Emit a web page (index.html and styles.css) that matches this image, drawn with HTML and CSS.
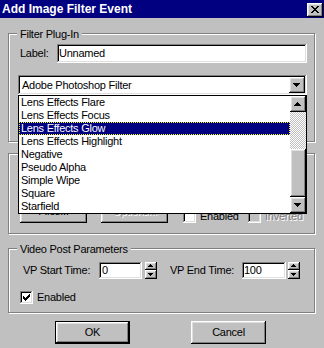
FILE: index.html
```html
<!DOCTYPE html>
<html>
<head>
<meta charset="utf-8">
<link rel="stylesheet" href="styles.css">
</head>
<body>
<div class="window">
  <div class="titlebar">
    <span class="title">Add Image Filter Event</span>
    <span class="close raised">
      <svg width="8" height="7" viewBox="0 0 8 7" shape-rendering="crispEdges"><path fill="#000" d="M0 0h2v1h-2z M6 0h2v1h-2z M1 1h2v1h-2z M5 1h2v1h-2z M2 2h4v1h-4z M3 3h2v1h-2z M2 4h4v1h-4z M1 5h2v1h-2z M5 5h2v1h-2z M0 6h2v1h-2z M6 6h2v1h-2z"/></svg>
    </span>
  </div>
  <div class="content">
    <div class="group g1">
      <span class="legend">Filter Plug-In</span>
      <div class="label-row">
        <span class="lbl">Label:</span>
        <div class="field name-field">Unnamed</div>
      </div>
      <div class="combo-wrap">
        <div class="combo field">
          <span class="combo-text">Adobe Photoshop Filter</span>
          <span class="drop raised">
            <svg width="16" height="16" viewBox="0 0 16 16" shape-rendering="crispEdges"><path fill="#000" d="M4 6h7v1h-7z M5 7h5v1h-5z M6 8h3v1h-3z M7 9h1v1h-1z"/></svg>
          </span>
        </div>
        <div class="list">
          <div class="items">
            <div class="item">Lens Effects Flare</div>
            <div class="item">Lens Effects Focus</div>
            <div class="item selected">Lens Effects Glow</div>
            <div class="item">Lens Effects Highlight</div>
            <div class="item">Negative</div>
            <div class="item">Pseudo Alpha</div>
            <div class="item">Simple Wipe</div>
            <div class="item">Square</div>
            <div class="item">Starfield</div>
          </div>
          <div class="scrollbar">
            <div class="sb-btn raised">
              <svg width="16" height="16" viewBox="0 0 16 16" shape-rendering="crispEdges"><path fill="#000" d="M7 6h1v1h-1z M6 7h3v1h-3z M5 8h5v1h-5z M4 9h7v1h-7z"/></svg>
            </div>
            <div class="sb-track"></div>
            <div class="sb-thumb raised"></div>
            <div class="sb-btn raised">
              <svg width="16" height="16" viewBox="0 0 16 16" shape-rendering="crispEdges"><path fill="#000" d="M4 6h7v1h-7z M5 7h5v1h-5z M6 8h3v1h-3z M7 9h1v1h-1z"/></svg>
            </div>
          </div>
        </div>
      </div>
    </div>

    <div class="group g2">
      <div class="mask-row">
        <div class="pbtn raised">Files...</div>
        <div class="pbtn raised disabled">Options...</div>
        <div class="check check-enabled"><span class="box"></span><span>Enabled</span></div>
        <div class="check disabled"><span class="box"></span><span>Inverted</span></div>
      </div>
    </div>

    <div class="group g3">
      <span class="legend">Video Post Parameters</span>
      <div class="vp-row">
        <span class="vp-lbl start-lbl">VP Start Time:</span>
        <div class="field vp-field">0</div>
        <div class="spinner">
          <div class="spin-up raised">
            <svg width="12" height="8" viewBox="0 0 12 8" shape-rendering="crispEdges"><path fill="#000" d="M5 2h1v1h-1z M4 3h3v1h-3z M3 4h5v1h-5z"/></svg>
          </div>
          <div class="spin-down raised">
            <svg width="12" height="9" viewBox="0 0 12 9" shape-rendering="crispEdges"><path fill="#000" d="M3 3h5v1h-5z M4 4h3v1h-3z M5 5h1v1h-1z"/></svg>
          </div>
        </div>
        <span class="vp-lbl end-lbl">VP End Time:</span>
        <div class="field vp-field end-field">100</div>
        <div class="spinner end-spinner">
          <div class="spin-up raised">
            <svg width="12" height="8" viewBox="0 0 12 8" shape-rendering="crispEdges"><path fill="#000" d="M5 2h1v1h-1z M4 3h3v1h-3z M3 4h5v1h-5z"/></svg>
          </div>
          <div class="spin-down raised">
            <svg width="12" height="9" viewBox="0 0 12 9" shape-rendering="crispEdges"><path fill="#000" d="M3 3h5v1h-5z M4 4h3v1h-3z M5 5h1v1h-1z"/></svg>
          </div>
        </div>
      </div>
      <div class="check vp-check">
        <span class="box">
          <svg width="7" height="7" viewBox="0 0 7 7" shape-rendering="crispEdges"><path fill="#000" d="M6 0h1v1h-1z M5 1h2v1h-2z M0 2h1v1h-1z M4 2h3v1h-3z M0 3h2v1h-2z M3 3h3v1h-3z M0 4h5v1h-5z M1 5h3v1h-3z M2 6h1v1h-1z"/></svg>
        </span>
        <span>Enabled</span>
      </div>
    </div>

    <div class="buttons">
      <div class="pbtn default">OK</div>
      <div class="pbtn raised">Cancel</div>
    </div>
  </div>
</div>
</body>
</html>
```

FILE: styles.css
```css
* { box-sizing: border-box; }
html, body { margin: 0; padding: 0; }
body {
  font-family: "Liberation Sans", Arial, sans-serif;
  font-size: 11px;
  letter-spacing: -0.25px;
  color: #000;
  background: #c0c0c0;
}
.window {
  width: 324px;
  height: 348px;
  background: #c0c0c0;
  overflow: hidden;
}
.raised {
  background: #c0c0c0;
  box-shadow: inset -1px -1px #000, inset 1px 1px #fff, inset -2px -2px #808080, inset 2px 2px #dfdfdf;
}
.field {
  background: #fff;
  box-shadow: inset -1px -1px #fff, inset 1px 1px #808080, inset -2px -2px #dfdfdf, inset 2px 2px #000;
}

/* title bar */
.titlebar {
  height: 18px;
  background: #000080;
  display: flex;
  align-items: flex-start;
  padding-left: 2px;
}
.title {
  color: #fff;
  font-weight: bold;
  font-size: 12px;
  letter-spacing: 0;
  line-height: 18px;
}
.close {
  margin-left: auto;
  margin-right: 1px;
  margin-top: 3px;
  width: 16px;
  height: 14px;
}
.close svg { display: block; margin: 3px 0 0 4px; }

/* body */
.content { padding: 15px 9px 0 8px; }
.group {
  position: relative;
  border: 1px solid #808080;
  box-shadow: inset 1px 1px #fff, 1px 1px #fff;
}
.legend {
  position: absolute;
  top: -6px;
  left: 8px;
  padding: 0 3px;
  background: #c0c0c0;
  line-height: 13px;
  white-space: nowrap;
}

/* group 1 */
.g1 { padding: 10px 7px 46px 9px; }
.label-row {
  display: flex;
  align-items: center;
  height: 19px;
  padding-left: 2px;
}
.lbl { width: 37px; flex: none; line-height: 13px; }
.name-field {
  width: 250px;
  height: 19px;
  line-height: 19px;
  padding-left: 2px;
}
.combo-wrap {
  position: relative;
  margin-top: 12px;
  width: 289px;
}
.combo {
  height: 20px;
  display: flex;
  padding: 2px;
}
.combo-text {
  flex: 1;
  line-height: 16px;
  padding-left: 2px;
}
.drop { width: 16px; height: 16px; flex: none; }
.drop svg, .sb-btn svg, .spinner svg { display: block; }

.list {
  position: absolute;
  z-index: 5;
  top: 100%;
  left: 0;
  width: 289px;
  height: 119px;
  border: 1px solid #000;
  background: #fff;
  display: flex;
}
.items { flex: 1; }
.item {
  height: 13px;
  line-height: 13px;
  padding-left: 2px;
  white-space: nowrap;
}
.item.selected {
  background: #000080;
  color: #fff;
  outline: 1px dotted #ffff00;
  outline-offset: -1px;
}
.scrollbar {
  width: 16px;
  display: flex;
  flex-direction: column;
}
.sb-btn { height: 16px; flex: none; }
.sb-track {
  flex: 1;
  background: repeating-conic-gradient(#c0c0c0 0 25%, #fff 0 50%) 0 0 / 2px 2px;
}
.sb-thumb { height: 48px; flex: none; }

/* group 2 */
.g2 { margin-top: 11px; padding: 46px 7px 10px 11px; }
.mask-row {
  display: flex;
  align-items: flex-end;
  height: 23px;
}
.pbtn {
  width: 67px;
  height: 23px;
  padding-top: 5px;
  line-height: 13px;
  text-align: center;
  white-space: nowrap;
}
.mask-row .pbtn + .pbtn { margin-left: 14px; }
.disabled { color: #808080; text-shadow: 1px 1px 0 #fff; }
.check {
  display: flex;
  align-items: center;
  height: 13px;
  line-height: 13px;
  white-space: nowrap;
}
.check .box {
  width: 13px;
  height: 13px;
  flex: none;
  margin-right: 4px;
  background: #fff;
  box-shadow: inset -1px -1px #fff, inset 1px 1px #808080, inset -2px -2px #dfdfdf, inset 2px 2px #000;
  display: flex;
  align-items: center;
  justify-content: center;
}
.check.disabled .box { background: #c0c0c0; }
.check-enabled { width: 65px; margin-left: 15px; }

/* group 3 */
.g3 { margin-top: 14px; padding: 13px 7px 8px 11px; }
.vp-row {
  display: flex;
  align-items: center;
  height: 17px;
}
.vp-lbl { line-height: 17px; white-space: nowrap; flex: none; }
.start-lbl { width: 76px; margin-left: 3px; }
.end-lbl { width: 72px; margin-left: 13px; }
.vp-field {
  width: 43px;
  height: 17px;
  line-height: 17px;
  padding-left: 3px;
  flex: none;
}
.end-field { width: 44px; padding-left: 2px; }
.spinner {
  width: 12px;
  height: 17px;
  margin-left: 3px;
  display: flex;
  flex-direction: column;
  flex: none;
}
.end-spinner { margin-left: 2px; }
.spin-up { height: 8px; }
.spin-down { height: 9px; }
.vp-check { margin-top: 12px; }
.vp-check .box svg { display: block; }

/* bottom buttons */
.buttons {
  display: flex;
  margin-top: 8px;
  padding-left: 47px;
  gap: 61px;
}
.buttons .pbtn { width: 75px; padding-top: 5px; }
.pbtn.default {
  border: 1px solid #000;
  padding-top: 4px;
  background: #c0c0c0;
  box-shadow: inset -1px -1px #000, inset 1px 1px #fff, inset -2px -2px #808080, inset 2px 2px #dfdfdf;
}
```
